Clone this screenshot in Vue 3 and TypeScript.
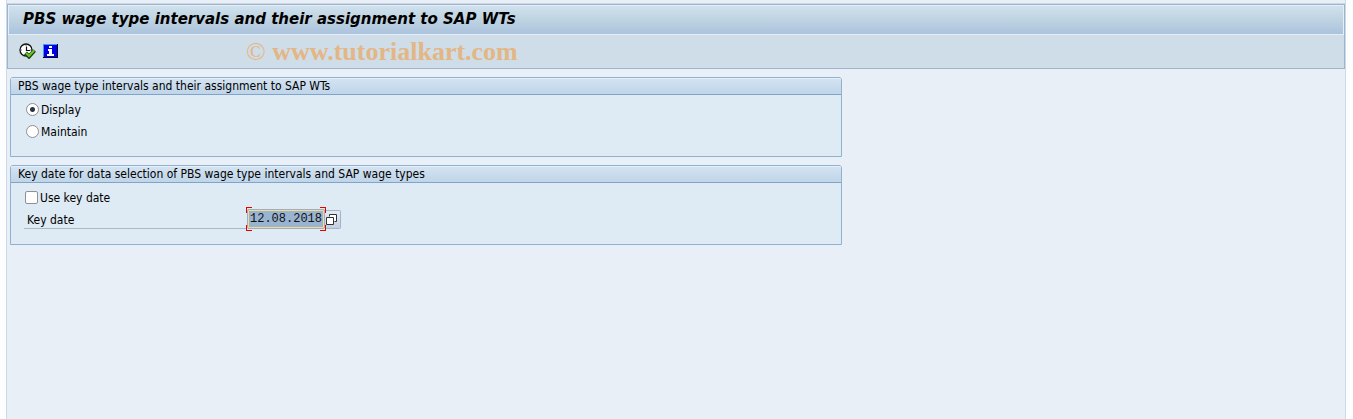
<script setup lang="ts">
import { ref } from 'vue'

const mode = ref<'display' | 'maintain'>('display')
const useKeyDate = ref(false)
const keyDate = ref('12.08.2018')
</script>

<template>
  <div class="window">
    <header class="head">
      <h1 class="title">PBS wage type intervals and their assignment to SAP WTs</h1>
      <div class="toolbar">
        <button class="tool" type="button" aria-label="Execute">
          <svg width="17" height="16" viewBox="0 0 17 16">
            <circle cx="7" cy="7" r="6" fill="#fff" stroke="#111" stroke-width="1.3" />
            <path d="M7 2v1M7 11v1M2 7h1M11 7h1" stroke="#777" />
            <path d="M7.5 3.5v4h3.500" fill="none" stroke="#111" stroke-width="1.2" />
            <path d="M6.500 10l3.500 3.500 5.500-6" fill="none" stroke="#163f08" stroke-width="4" />
            <path d="M7 10l3 3 5-5.500" fill="none" stroke="#6cc22c" stroke-width="2.200" />
          </svg>
        </button>
        <button class="tool" type="button" aria-label="Information">
          <svg width="15" height="14" viewBox="0 0 15 14" shape-rendering="crispEdges">
            <path d="M0 0h15v14H0z" fill="#000020" />
            <path d="M1 1h13v12H1z" fill="#0000e8" />
            <path d="M0 0h14v1H1v12H0z" fill="#35a5e8" />
            <path d="M6 2h3v2H6zM5 5h4v5h2v2H4v-2h2V7H5z" fill="#fff" />
          </svg>
        </button>
        <span class="mark"><span class="copy">©</span> www.tutorialkart.com</span>
      </div>
    </header>

    <main class="content">
      <section class="group">
        <h2 class="caption">PBS wage type intervals and their assignment to SAP WTs</h2>
        <div class="fields">
          <label class="row choice">
            <input v-model="mode" class="radio" type="radio" name="mode" value="display" />Display
          </label>
          <label class="row choice">
            <input v-model="mode" class="radio" type="radio" name="mode" value="maintain" />Maintain
          </label>
        </div>
      </section>

      <section class="group">
        <h2 class="caption">Key date for data selection of PBS wage type intervals and SAP wage types</h2>
        <div class="fields">
          <label class="row choice">
            <input v-model="useKeyDate" class="check" type="checkbox" />Use key date
          </label>
          <div class="row">
            <label class="name" for="key-date">Key date</label>
            <span class="entry">
              <input id="key-date" v-model="keyDate" class="date" type="text" maxlength="10" />
              <svg class="corners" width="80" height="24" viewBox="0 0 80 24" aria-hidden="true">
                <path d="M0 0h6v1H1v5H0zM74 0h6v6h-1V1h-5zM79 18h1v6h-6v-1h5zM0 18h1v5h5v1H0z" fill="#e80000" />
              </svg>
            </span>
            <button class="help" type="button" aria-label="Choose date">
              <svg width="11" height="11" viewBox="0 0 11 11">
                <path d="M3.500 2.500v-2h7v7h-2" fill="#fff" stroke="#333" />
                <path d="M.5 3.500h7v7h-7z" fill="#fff" stroke="#333" />
              </svg>
            </button>
          </div>
        </div>
      </section>
    </main>
  </div>
</template>

<style>
body {
  background: #fcfdfe;
}
</style>

<style scoped>
.window {
  box-sizing: border-box;
  min-height: 100vh;
  margin: 0 7px 0 6px;
  padding-top: 4px;
  border: solid #ced9e7;
  border-width: 0 1px;
  background: #e8eff7;
  color: #000;
  font: 12px/16px "DejaVu Sans Condensed", "DejaVu Sans", sans-serif;
}
.head {
  border: 1px solid #9fb3cc;
  background: #cfdde8;
  box-shadow: 0 -1px #ccd7e4;
}
.title {
  margin: 0;
  padding: 0 14px 2px;
  border: 1px solid #e3eef8;
  background: linear-gradient(#d0e1ed, #c0d4e2 45%, #abc3dd);
  font: italic bold 15px/26px "DejaVu Sans", sans-serif;
}
.toolbar {
  display: flex;
  align-items: center;
  height: 33px;
  padding: 0 11px;
}
.tool {
  display: flex;
  width: 24px;
  margin-bottom: 2px;
  padding: 0;
  border: 0;
  background: none;
}
.mark {
  margin-left: 179px;
  color: #e3b685;
  font: bold 26px/32px "Liberation Serif", serif;
}
.copy {
  font-weight: normal;
}
.content {
  display: flex;
  flex-direction: column;
  gap: 8px;
  padding: 8px 3px;
}
.group {
  box-sizing: border-box;
  width: 832px;
  max-width: 100%;
  border: 1px solid #8fb1d2;
  border-radius: 3px 3px 0 0;
  background: #deeaf4;
}
.caption {
  margin: 0;
  padding: 0 7px;
  border-bottom: 1px solid #84a3c9;
  border-radius: 2px 2px 0 0;
  background: linear-gradient(#d4e3f1, #bfd5e9);
  box-shadow: inset 0 1px #e6f0f8;
  font: inherit;
}
.fields {
  padding: 4px 13px 13px;
}
.row {
  display: flex;
  align-items: center;
  height: 22px;
}
.choice {
  width: max-content;
}
.radio,
.check {
  box-sizing: border-box;
  flex: none;
  width: 13px;
  height: 13px;
  margin: 0 2px 2px 1px;
  border: 1px solid #8e9196;
  background: #fff;
  appearance: none;
}
.radio {
  border-radius: 50%;
  margin-left: 2px;
}
.check {
  border-radius: 2px;
}
.radio:checked {
  background: radial-gradient(circle, #2f3247 2px, #fff 3px);
}
.check:checked {
  background: #2f3247;
  box-shadow: inset 0 0 0 2px #fff;
}
.name {
  box-sizing: border-box;
  width: 223px;
  padding: 1px 3px 0;
  border-bottom: 1px solid #aeb8c3;
}
.entry {
  position: relative;
  display: flex;
  margin-bottom: 2px;
}
.date {
  box-sizing: border-box;
  width: 78px;
  height: 20px;
  padding: 0 0 0 1px;
  border: 2px solid #eddc9c;
  border-radius: 2px;
  outline: 1px solid #a9acae;
  outline-offset: -1px;
  background: #99b4d1;
  color: #111;
  font: 12px/16px "Liberation Mono", monospace;
}
.corners {
  position: absolute;
  top: -2px;
  left: -1px;
  pointer-events: none;
}
.help {
  display: flex;
  align-items: center;
  justify-content: center;
  width: 16px;
  height: 19px;
  margin-bottom: 2px;
  padding: 0 2px 0 0;
  border: 1px solid #a5b4c5;
  border-left: 0;
  border-radius: 0 2px 2px 0;
  background: linear-gradient(#e4ebf4, #c3d0e2);
}
</style>
